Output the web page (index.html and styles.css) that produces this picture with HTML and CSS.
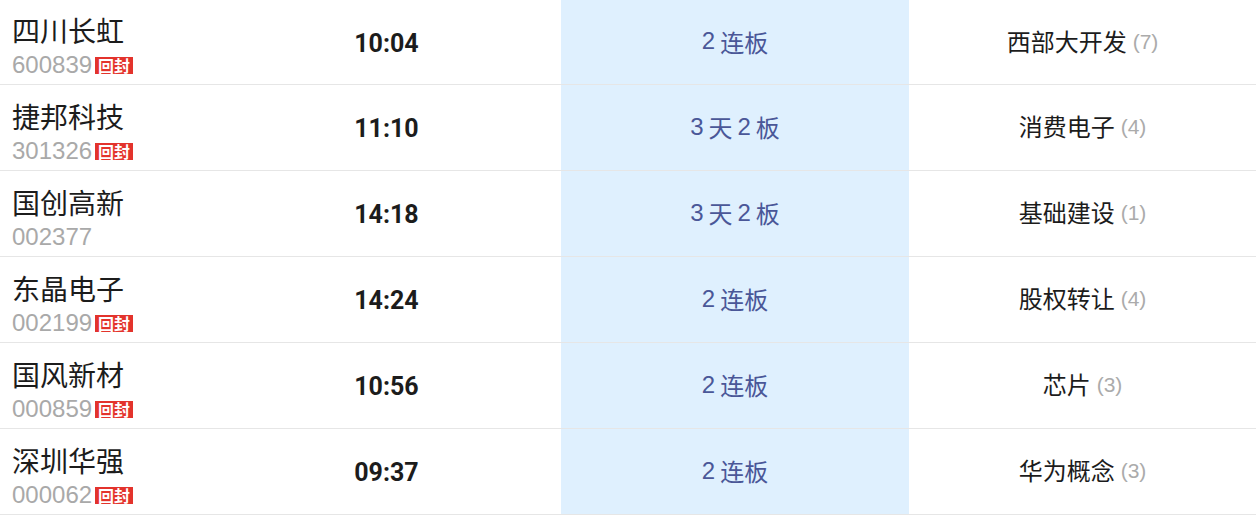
FILE: index.html
```html
<!DOCTYPE html>
<html lang="zh">
<head>
<meta charset="utf-8">
<link rel="stylesheet" href="styles.css">
</head>
<body>
<div class="table">
  <div class="row first">
    <div class="cell stock"><div class="name">四川长虹</div><div class="code">600839<span class="badge">回封</span></div></div>
    <div class="cell time">10:04</div>
    <div class="cell board"><span class="num">2</span>连板</div>
    <div class="cell concept">西部大开发<span class="cnt">(7)</span></div>
  </div>
  <div class="row">
    <div class="cell stock"><div class="name">捷邦科技</div><div class="code">301326<span class="badge">回封</span></div></div>
    <div class="cell time">11:10</div>
    <div class="cell board"><span class="num">3</span>天<span class="num mid">2</span>板</div>
    <div class="cell concept">消费电子<span class="cnt">(4)</span></div>
  </div>
  <div class="row">
    <div class="cell stock"><div class="name">国创高新</div><div class="code">002377</div></div>
    <div class="cell time">14:18</div>
    <div class="cell board"><span class="num">3</span>天<span class="num mid">2</span>板</div>
    <div class="cell concept">基础建设<span class="cnt">(1)</span></div>
  </div>
  <div class="row">
    <div class="cell stock"><div class="name">东晶电子</div><div class="code">002199<span class="badge">回封</span></div></div>
    <div class="cell time">14:24</div>
    <div class="cell board"><span class="num">2</span>连板</div>
    <div class="cell concept">股权转让<span class="cnt">(4)</span></div>
  </div>
  <div class="row">
    <div class="cell stock"><div class="name">国风新材</div><div class="code">000859<span class="badge">回封</span></div></div>
    <div class="cell time">10:56</div>
    <div class="cell board"><span class="num">2</span>连板</div>
    <div class="cell concept">芯片<span class="cnt">(3)</span></div>
  </div>
  <div class="row">
    <div class="cell stock"><div class="name">深圳华强</div><div class="code">000062<span class="badge">回封</span></div></div>
    <div class="cell time">09:37</div>
    <div class="cell board"><span class="num">2</span>连板</div>
    <div class="cell concept">华为概念<span class="cnt">(3)</span></div>
  </div>
</div>
</body>
</html>
```
FILE: styles.css
```css
html, body {
  margin: 0;
  padding: 0;
  background: #ffffff;
}
body {
  font-family: "Noto Sans", "Noto Sans CJK SC", sans-serif;
  overflow: hidden;
}
.table {
  display: flex;
  flex-direction: column;
  width: 1256px;
}
.row {
  display: grid;
  grid-template-columns: 212px 349px 348px 1fr;
  height: 86px;
  box-sizing: border-box;
  border-bottom: 1px solid #e6e6e6;
}
.row.first {
  height: 85px;
}
.cell {
  display: flex;
  align-items: center;
  justify-content: center;
}
.stock {
  flex-direction: column;
  align-items: flex-start;
  justify-content: flex-start;
  padding: 14px 0 0 12px;
}
.row.first .stock {
  padding-top: 13px;
}
.name {
  font-family: "Noto Sans CJK SC", sans-serif;
  font-size: 28px;
  line-height: 34px;
  color: #1c1c1c;
}
.code {
  display: flex;
  align-items: center;
  margin-top: 5px;
  font-family: "Liberation Sans", "Noto Sans CJK SC", sans-serif;
  font-size: 24px;
  line-height: 26px;
  color: #a9a9a9;
}
.badge {
  display: inline-flex;
  align-items: center;
  justify-content: center;
  width: 38px;
  height: 17px;
  margin-left: 3px;
  margin-top: 1px;
  background: #e3332c;
  color: #ffffff;
  font-family: "Noto Sans CJK SC", sans-serif;
  font-size: 16px;
  font-weight: 700;
  line-height: 17px;
}
.time {
  font-family: "Roboto", "Noto Sans", sans-serif;
  font-weight: 700;
  font-size: 25px;
  color: #1c1c1c;
  padding-top: 2px;
}
.board {
  background: #dff0fe;
  color: #4a5798;
  font-family: "Noto Sans CJK SC", sans-serif;
  font-size: 24px;
  padding-bottom: 2px;
}
.num {
  font-family: "Liberation Sans", sans-serif;
  margin-right: 5px;
}
.num.mid {
  margin-left: 5px;
}
.concept {
  font-family: "Noto Sans CJK SC", sans-serif;
  font-size: 24px;
  color: #1c1c1c;
  padding-bottom: 4px;
}
.cnt {
  font-family: "Liberation Sans", sans-serif;
  font-size: 21px;
  color: #ababab;
  margin-left: 6px;
  padding-top: 3px;
}
```
